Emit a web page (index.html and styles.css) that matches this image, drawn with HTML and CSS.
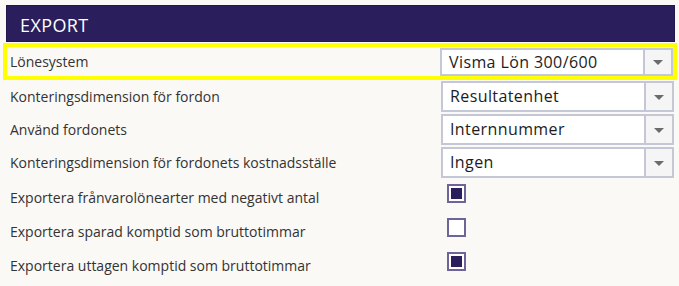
FILE: index.html
```html
<!DOCTYPE html>
<html>
<head>
  <title>Export</title>
  <link rel="stylesheet" href="styles.css">
</head>
<body>
  <div class="header">EXPORT</div>
  <div class="panel">
    <div class="row select-row active">
      <span class="label">Lönesystem</span>
      <div class="select"><span class="value">Visma Lön 300/600</span><span class="arrow"></span></div>
    </div>
    <div class="row select-row">
      <span class="label">Konteringsdimension för fordon</span>
      <div class="select"><span class="value">Resultatenhet</span><span class="arrow"></span></div>
    </div>
    <div class="row select-row">
      <span class="label">Använd fordonets</span>
      <div class="select"><span class="value">Internnummer</span><span class="arrow"></span></div>
    </div>
    <div class="row select-row">
      <span class="label">Konteringsdimension för fordonets kostnadsställe</span>
      <div class="select"><span class="value">Ingen</span><span class="arrow"></span></div>
    </div>
    <div class="row check-row">
      <span class="label">Exportera frånvarolönearter med negativt antal</span>
      <div><span class="check checked"></span></div>
    </div>
    <div class="row check-row">
      <span class="label">Exportera sparad komptid som bruttotimmar</span>
      <div><span class="check"></span></div>
    </div>
    <div class="row check-row">
      <span class="label">Exportera uttagen komptid som bruttotimmar</span>
      <div><span class="check checked"></span></div>
    </div>
  </div>
</body>
</html>
```

FILE: styles.css
```css
body {
  margin: 0;
  background: #faf9f6;
  font-family: "Open Sans", "Noto Sans", sans-serif;
  color: #333;
}
.header {
  height: 34px;
  margin: 5px 4px 0 6px;
  padding: 1px 0 0 13px;
  background: #2a1e5c;
  border: 1px solid #21174d;
  color: #fff;
  font-size: 18px;
  letter-spacing: 0.4px;
  line-height: 36px;
}
.panel {
  margin: 1px 2px 0 3px;
}
.row {
  display: grid;
  grid-template-columns: 1fr 233px;
  align-items: center;
  padding: 0 3px 0 7px;
}
.select-row {
  height: 33px;
}
.check-row {
  height: 34px;
}
.check-row .label {
  padding-top: 3px;
}
.row.active {
  height: 29px;
  border: 4px solid #ffff00;
  padding: 0 0 0 3px;
}
.label {
  font-size: 14px;
}
.select {
  display: flex;
  height: 31px;
  box-sizing: border-box;
  border: 2px solid #c3c7d6;
  background: #fff;
}
.row.active .select {
  height: 28px;
}
.value {
  flex: 1;
  padding-left: 7px;
  font-size: 16px;
  letter-spacing: 0.4px;
  color: #1c1c1c;
  line-height: 27px;
}
.row.active .value {
  line-height: 24px;
}
.arrow {
  width: 26px;
  border-left: 2px solid #c3c7d6;
  background: #f5f5f5;
  position: relative;
}
.arrow::after {
  content: "";
  position: absolute;
  left: 8px;
  top: 50%;
  margin-top: -2px;
  border-left: 5px solid transparent;
  border-right: 5px solid transparent;
  border-top: 5px solid #6b6b6b;
}
.check {
  display: block;
  width: 19px;
  height: 19px;
  box-sizing: border-box;
  margin: -6px 0 0 6px;
  border: 2px solid #6d6597;
  background: #fff;
  position: relative;
}
.check.checked::after {
  content: "";
  position: absolute;
  left: 2px;
  top: 2px;
  width: 11px;
  height: 11px;
  background: #2a1e5c;
}
```
